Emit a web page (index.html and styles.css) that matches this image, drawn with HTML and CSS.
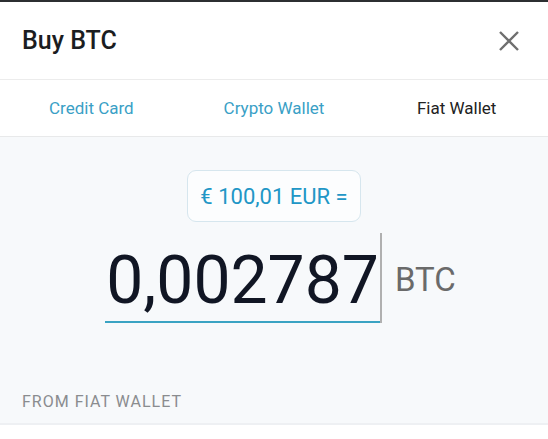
FILE: index.html
```html
<!DOCTYPE html>
<html lang="en">

<head>
    <meta charset="UTF-8">
    <meta name="viewport" content="width=device-width, initial-scale=1.0">
    <title>Buy BTC</title>
    <link rel="stylesheet" href="styles.css">
</head>

<body>
    <div class="sheet">
        <div class="header">
            <h1 class="title">Buy BTC</h1>
            <span class="close">
                <svg width="22" height="22" viewBox="0 0 22 22">
                    <path d="M2 2 L20 20 M20 2 L2 20" stroke="#6f6f6f" stroke-width="2.4" fill="none" />
                </svg>
            </span>
        </div>

        <ul class="tabs">
            <li>Credit Card</li>
            <li>Crypto Wallet</li>
            <li class="active">Fiat Wallet</li>
        </ul>

        <div class="body">
            <div class="fiat">€ 100,01 EUR =</div>

            <div class="amount">
                <span class="value">0,002787</span>
                <span class="cursor"></span>
                <span class="unit">BTC</span>
            </div>

            <p class="label">FROM FIAT WALLET</p>
        </div>
    </div>
</body>

</html>
```

FILE: styles.css
```css
* {
    margin: 0;
    padding: 0;
    list-style: none;
    box-sizing: border-box;
}

body {
    font-family: Roboto, "Liberation Sans", sans-serif;
    background-color: #fff;
}

.sheet {
    border-top: 2px solid #2c2f31;
}

.header {
    height: 78px;
    display: flex;
    align-items: center;
    justify-content: space-between;
    padding: 0 28px 0 22px;
    border-bottom: 1px solid #ececec;
}

.title {
    font-size: 25px;
    font-weight: 500;
    color: #1b1d21;
}

.close {
    display: flex;
}

.tabs {
    display: flex;
    height: 57px;
    border-bottom: 1px solid #e8e9ea;
}

.tabs li {
    flex: 1;
    display: flex;
    align-items: center;
    justify-content: center;
    font-size: 17px;
    color: #3a9fc6;
}

.tabs li.active {
    color: #222;
}

.body {
    background-color: #f7f9fb;
    height: 288px;
    border-bottom: 2px solid #eef0f3;
    display: flex;
    flex-direction: column;
    align-items: center;
    padding-top: 33px;
}

.fiat {
    height: 52px;
    padding: 0 12px;
    display: flex;
    align-items: center;
    border: 1px solid #d6e6ee;
    border-radius: 9px;
    background-color: #fcfdfe;
    font-size: 22px;
    color: #2196c6;
}

.amount {
    display: flex;
    align-items: center;
    margin-top: 11px;
    margin-left: 13px;
}

.value {
    font-size: 66px;
    color: #111624;
    line-height: 80px;
    padding: 8px 1px 0;
    border-bottom: 2px solid #3aa3c3;
}

.cursor {
    width: 2px;
    height: 90px;
    background-color: #b0b0b0;
}

.unit {
    font-size: 33px;
    color: #6a6a6a;
    margin-left: 13px;
    margin-top: 3px;
}

.label {
    align-self: flex-start;
    margin: 69px 0 0 22px;
    font-size: 16px;
    letter-spacing: 1px;
    color: #8a8c8f;
}
```
